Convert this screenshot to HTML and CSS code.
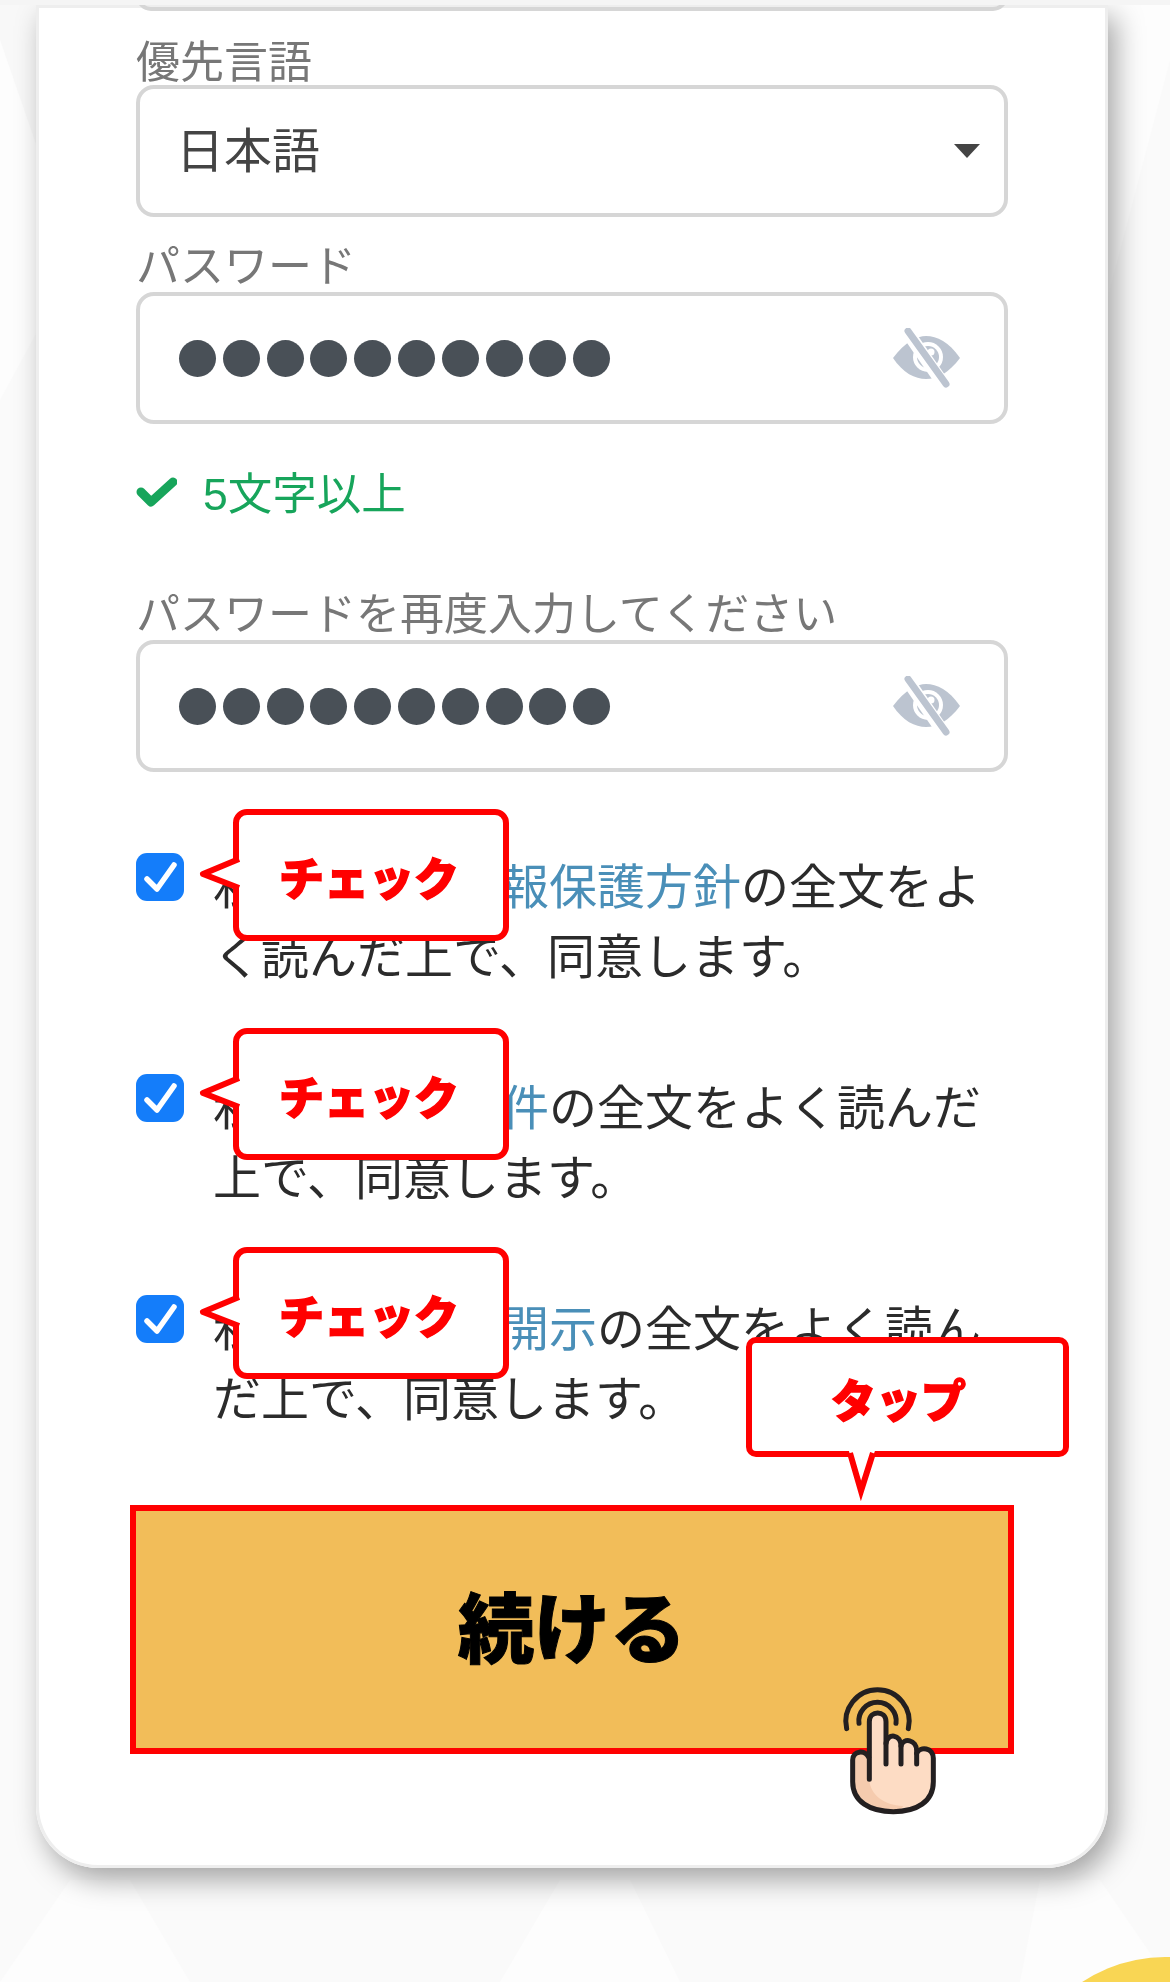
FILE: index.html
```html
<!DOCTYPE html>
<html lang="ja">
<head>
    <meta charset="UTF-8">
    <meta name="viewport" content="width=device-width, initial-scale=1.0">
    <title>アカウント登録</title>
    <link rel="stylesheet" href="styles.css">
</head>
<body>
    <svg class="backdrop" viewBox="0 0 1170 1982" aria-hidden="true">
        <polygon points="0,0 38,0 38,196 0,196" fill="#f8f8f8"/>
        <polygon points="0,40 38,150 38,330 0,400" fill="#fdfdfd"/>
        <polygon points="1107,0 1170,0 1170,60 1107,300" fill="#fdfdfd"/>
        <polygon points="70,1880 130,1880 190,1982 0,1982" fill="#fdfdfd"/>
        <polygon points="560,1880 630,1880 680,1982 500,1982" fill="#fdfdfd"/>
        <polygon points="1040,1880 1100,1880 1170,1982 1020,1982" fill="#fdfdfd"/>
        <circle cx="1165" cy="2107" r="150" fill="#f9d654"/>
    </svg>
    <div class="topbar"></div>

    <div class="card">
        <div class="field-stub"></div>

        <label class="field-label first">優先言語</label>
        <div class="field">
            <span class="field-value">日本語</span>
            <span class="caret"></span>
        </div>

        <label class="field-label">パスワード</label>
        <div class="field">
            <span class="dots">
                <i></i><i></i><i></i><i></i><i></i><i></i><i></i><i></i><i></i><i></i>
            </span>
            <svg class="eye" viewBox="0 0 68 60">
                <path d="M0 30C12 14 24 8 33 8C44 8 56 14 67 30C56 45 44 51 33 51C22 51 10 45 0 30Z" fill="#bcc4d0"/>
                <circle cx="35" cy="29" r="15" fill="#fff"/>
                <circle cx="35" cy="29" r="11" fill="#bcc4d0"/>
                <circle cx="38" cy="24" r="3.5" fill="#fff"/>
                <path d="M13 2L51 57" stroke="#fff" stroke-width="13"/>
                <path d="M15 3L53 56" stroke="#bcc4d0" stroke-width="7" stroke-linecap="round"/>
            </svg>
        </div>

        <div class="hint">
            <svg class="hint-check" viewBox="0 0 41 30">
                <path d="M5 15L15 25L37 5" fill="none" stroke="#17a55b" stroke-width="9" stroke-linecap="round" stroke-linejoin="round"/>
            </svg>
            <span>5文字以上</span>
        </div>

        <label class="field-label">パスワードを再度入力してください</label>
        <div class="field">
            <span class="dots">
                <i></i><i></i><i></i><i></i><i></i><i></i><i></i><i></i><i></i><i></i>
            </span>
            <svg class="eye" viewBox="0 0 68 60">
                <path d="M0 30C12 14 24 8 33 8C44 8 56 14 67 30C56 45 44 51 33 51C22 51 10 45 0 30Z" fill="#bcc4d0"/>
                <circle cx="35" cy="29" r="15" fill="#fff"/>
                <circle cx="35" cy="29" r="11" fill="#bcc4d0"/>
                <circle cx="38" cy="24" r="3.5" fill="#fff"/>
                <path d="M13 2L51 57" stroke="#fff" stroke-width="13"/>
                <path d="M15 3L53 56" stroke="#bcc4d0" stroke-width="7" stroke-linecap="round"/>
            </svg>
        </div>

        <div class="agree">
            <svg class="checkbox" viewBox="0 0 48 48">
                <rect width="48" height="48" rx="11" fill="#147dfa"/>
                <path d="M11 26L21 36L38 12" fill="none" stroke="#fff" stroke-width="5.5" stroke-linecap="round" stroke-linejoin="round"/>
            </svg>
            <p>私は、個人情<a href="#">報保護方針</a>の全文をよく読んだ上で、同意します。</p>
        </div>
        <div class="agree">
            <svg class="checkbox" viewBox="0 0 48 48">
                <rect width="48" height="48" rx="11" fill="#147dfa"/>
                <path d="M11 26L21 36L38 12" fill="none" stroke="#fff" stroke-width="5.5" stroke-linecap="round" stroke-linejoin="round"/>
            </svg>
            <p>私は、<a href="#">利用条件</a>の全文をよく読んだ上で、同意します。</p>
        </div>
        <div class="agree">
            <svg class="checkbox" viewBox="0 0 48 48">
                <rect width="48" height="48" rx="11" fill="#147dfa"/>
                <path d="M11 26L21 36L38 12" fill="none" stroke="#fff" stroke-width="5.5" stroke-linecap="round" stroke-linejoin="round"/>
            </svg>
            <p>私は、<a href="#">電磁的開示</a>の全文をよく読んだ上で、同意します。</p>
        </div>

        <button class="continue">続ける</button>

        <!-- annotations drawn on top of the form -->
        <div class="callout check-1">
            <svg class="tail-left" viewBox="0 0 46 42">
                <polygon points="46,4 5,21 46,37" fill="#fff"/>
                <polyline points="41,6 5,21 41,35" fill="none" stroke="#f00" stroke-width="6" stroke-linejoin="round"/>
            </svg>
            チェック
        </div>
        <div class="callout check-2">
            <svg class="tail-left" viewBox="0 0 46 42">
                <polygon points="46,4 5,21 46,37" fill="#fff"/>
                <polyline points="41,6 5,21 41,35" fill="none" stroke="#f00" stroke-width="6" stroke-linejoin="round"/>
            </svg>
            チェック
        </div>
        <div class="callout check-3">
            <svg class="tail-left" viewBox="0 0 46 42">
                <polygon points="46,4 5,21 46,37" fill="#fff"/>
                <polyline points="41,6 5,21 41,35" fill="none" stroke="#f00" stroke-width="6" stroke-linejoin="round"/>
            </svg>
            チェック
        </div>
        <div class="callout tap">
            <svg class="tail-down" viewBox="0 0 44 54">
                <polygon points="8,0 21,42 36,0" fill="#fff"/>
                <polyline points="10,5 21,43 33,5" fill="none" stroke="#f00" stroke-width="6"/>
            </svg>
            タップ
        </div>

        <svg class="hand" viewBox="0 0 540 510">
            <g fill="none" stroke="#231f20" stroke-width="15" stroke-linecap="round">
                <path d="M140 206A95 95 0 1 1 325 206"/>
                <path d="M177 190A56 56 0 1 1 288 190"/>
            </g>
            <path d="M158 300C158 268 205 268 208 300L208 185C208 150 258 150 258 185L258 250C262 218 303 222 303 258C310 232 350 238 350 272C360 258 400 262 400 295L400 365C400 425 350 455 280 455C210 455 158 425 158 365Z" fill="#fddcc4"/>
            <path d="M158 300C158 268 200 272 208 300L208 360C212 405 250 435 310 438C300 452 290 455 280 455C210 455 158 425 158 365Z" fill="#f5cbae"/>
            <g fill="none" stroke="#231f20" stroke-width="15" stroke-linecap="round" stroke-linejoin="round">
                <path d="M208 358L208 185C208 150 258 150 258 185L258 312"/>
                <path d="M258 250C262 218 303 222 303 258L303 312"/>
                <path d="M303 258C310 232 350 238 350 272L350 312"/>
                <path d="M350 280C360 258 400 262 400 295L400 365C400 425 350 455 280 455C210 455 158 425 158 365L158 300C158 272 195 268 206 292"/>
            </g>
        </svg>
    </div>
</body>
</html>
```

FILE: styles.css
```css
html, body {
    margin: 0;
    height: 1982px;
    overflow: hidden;
}
body {
    position: relative;
    background: #fafafa;
    font-family: "Liberation Sans", "Noto Sans CJK JP", sans-serif;
    color: #333;
}
.backdrop {
    position: absolute;
    left: 0;
    top: 0;
    width: 1170px;
    height: 1982px;
}
.topbar {
    position: relative;
    z-index: 2;
    height: 5px;
    background: #f5f5f5;
}
.card {
    position: relative;
    box-sizing: border-box;
    width: 1072px;
    height: 1863px;
    margin-left: 36px;
    padding: 0 100px;
    overflow: hidden;
    background: #fff;
    border-radius: 0 0 62px 62px;
    box-shadow: inset 0 0 0 3px #eee;
    filter: drop-shadow(8px 12px 14px rgba(0, 0, 0, 0.34));
}
.field-stub {
    height: 30px;
    margin-top: -24px;
    box-sizing: border-box;
    border: 4px solid #d6d6d6;
    border-radius: 18px;
}
.field-label {
    display: block;
    margin-top: 23px;
    padding: 5px 0 3px;
    font-size: 44px;
    line-height: 44px;
    color: #777;
}
.field-label.first {
    margin-top: 22px;
    padding: 8px 0 0;
}
.field {
    box-sizing: border-box;
    height: 132px;
    padding: 0 43px 0 40px;
    display: flex;
    align-items: center;
    justify-content: space-between;
    border: 4px solid #d6d6d6;
    border-radius: 18px;
}
.field-value {
    margin: -9px 0 0 -4px;
    font-size: 48px;
    color: #444;
}
.caret {
    margin-right: -19px;
    border-style: solid;
    border-width: 14px 13px 0;
    border-color: #444 transparent transparent;
}
.dots {
    display: flex;
    gap: 6.8px;
    margin-left: -1px;
}
.dots i {
    width: 37px;
    height: 37px;
    border-radius: 50%;
    background: #495057;
}
.eye {
    width: 68px;
    height: 60px;
}
.hint {
    display: flex;
    align-items: center;
    gap: 26px;
    margin-top: 45px;
    margin-bottom: 67px;
    font-size: 44.5px;
    line-height: 52px;
    color: #17a55b;
}
.hint-check {
    width: 41px;
    height: 30px;
    margin-top: -6px;
}
.hint + .field-label {
    margin-top: 0;
}
.agree {
    display: flex;
    gap: 29px;
    margin-top: 81px;
}
.checkbox {
    flex: none;
    width: 48px;
    height: 48px;
}
.agree p {
    margin: 0;
    width: 795px;
    font-size: 48px;
    line-height: 70px;
    color: #2b2b2b;
}
.agree a {
    color: #4a8fb8;
    text-decoration: none;
}
.continue {
    display: block;
    box-sizing: border-box;
    width: 884px;
    height: 249px;
    margin: 70px 0 0 -6px;
    padding-bottom: 12px;
    border: 6px solid #f00;
    background: #f2bd59;
    color: #000;
    font-family: inherit;
    font-size: 76px;
    font-weight: 900;
    -webkit-text-stroke: 1px #000;
}
.callout {
    position: absolute;
    box-sizing: border-box;
    display: flex;
    align-items: center;
    justify-content: center;
    width: 276px;
    height: 132px;
    padding: 3px 4px 0 0;
    border: 6px solid #f00;
    border-radius: 14px;
    background: #fff;
    color: #f00;
    font-size: 45px;
    font-weight: 900;
    -webkit-text-stroke: 1.5px #f00;
}
.check-1 { left: 197px; top: 804px; }
.check-2 { left: 197px; top: 1023px; }
.check-3 { left: 197px; top: 1242px; }
.callout.tap {
    left: 710px;
    top: 1332px;
    width: 323px;
    height: 120px;
    padding-right: 18px;
    border-radius: 10px;
}
.tail-left {
    position: absolute;
    left: -41px;
    top: 38px;
    width: 46px;
    height: 42px;
}
.tail-down {
    position: absolute;
    left: 88px;
    top: 105px;
    width: 44px;
    height: 54px;
}
.hand {
    position: absolute;
    left: 764px;
    top: 1655px;
    width: 180px;
    height: 170px;
}
```
